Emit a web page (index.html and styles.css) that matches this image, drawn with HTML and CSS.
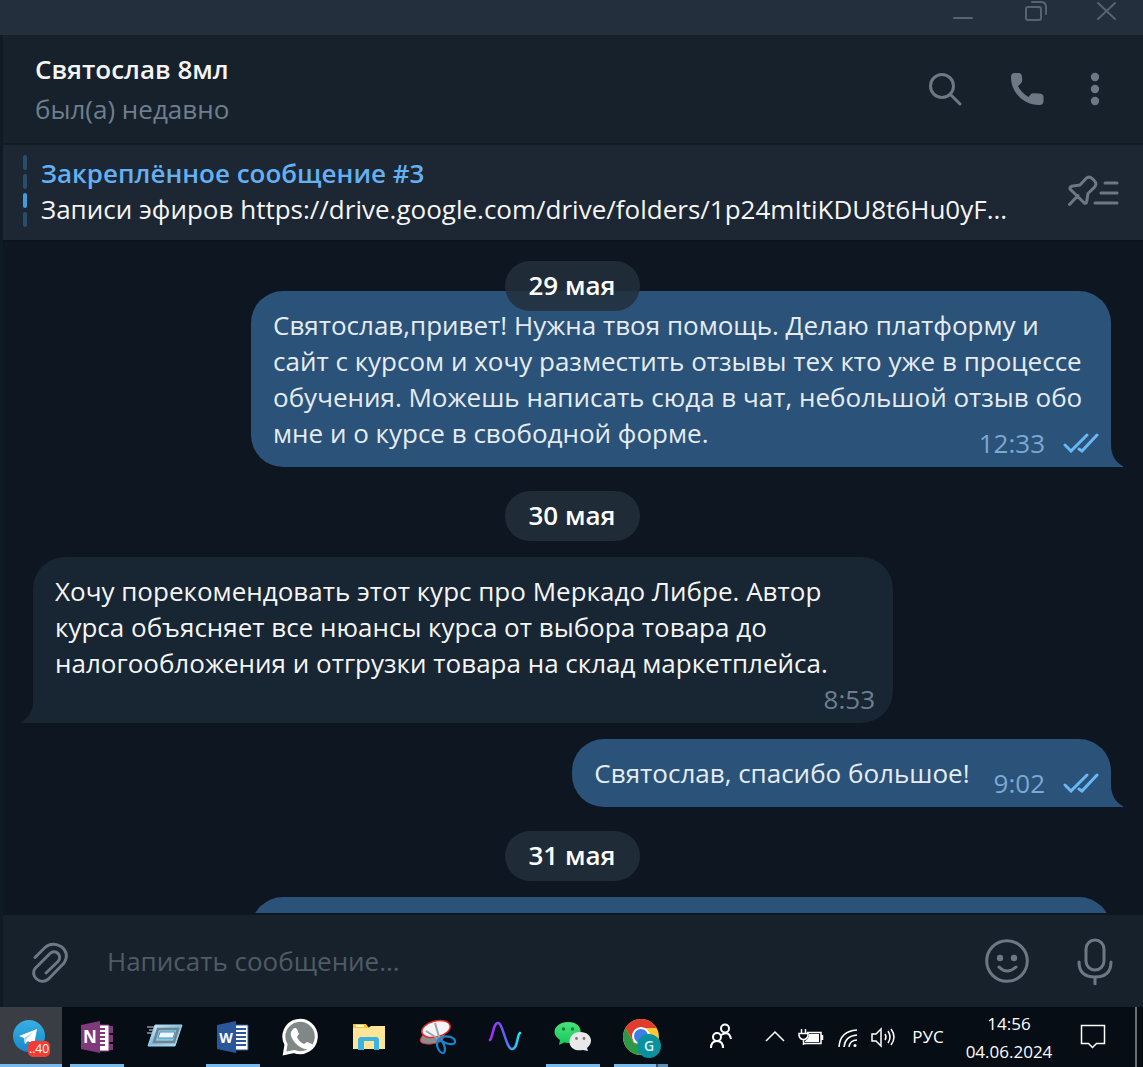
FILE: index.html
```html
<!DOCTYPE html>
<html lang="ru">
<head>
<meta charset="utf-8">
<meta name="viewport" content="width=device-width, initial-scale=1">
<title>Святослав 8мл</title>
<link rel="stylesheet" href="styles.css">
</head>
<body>
<div class="titlebar">
  <button class="window-button" aria-label="Свернуть"><svg width="24" height="24" viewBox="0 0 24 24"><path d="M3 18h18"/></svg></button>
  <button class="window-button" aria-label="Свернуть в окно"><svg width="24" height="24" viewBox="0 0 24 24"><rect x="3" y="7" width="15" height="13" rx="2"/><path d="M9 2h9q5 0 5 5v7"/></svg></button>
  <button class="window-button" aria-label="Закрыть"><svg width="24" height="24" viewBox="0 0 24 24"><path d="M3 3l17 16M20 3L3 19"/></svg></button>
</div>
<div class="app">
  <header class="chat-header">
    <div class="peer">
      <h1 class="peer-name">Святослав 8мл</h1>
      <p class="peer-status">был(а) недавно</p>
    </div>
    <div class="header-actions">
      <button class="icon-button" aria-label="Поиск"><svg width="36" height="36" viewBox="0 0 36 36"><circle cx="15" cy="15" r="11.5"/><path d="M23.500 23.500L33 33"/></svg></button>
      <button class="icon-button" aria-label="Позвонить"><svg width="36" height="36" viewBox="0 0 36 36"><path class="solid" d="M5.500 2h4.500q2.500 0 2.800 2.500l.4 4q.2 2.500-1.200 3.800l-3 3q3.600 6.800 10.500 10.700l2-2.500q1-1.200 3-1.200l5.500.3q4.500.3 4.500 3.200v4.200q0 4-4 4C14.500 34 2 21.500 2 6q0-4 3.500-4z"/></svg></button>
      <button class="icon-button" aria-label="Меню"><svg width="36" height="36" viewBox="0 0 36 36"><circle class="solid" cx="18" cy="6" r="4.200"/><circle class="solid" cx="18" cy="18" r="4.200"/><circle class="solid" cx="18" cy="30" r="4.200"/></svg></button>
    </div>
  </header>
  <section class="pinned">
    <div class="pinned-marks"><i></i><i></i><i class="current"></i><i></i></div>
    <div class="pinned-body">
      <h2 class="pinned-title">Закреплённое сообщение #3</h2>
      <p class="pinned-text">Записи эфиров https://drive.google.com/drive/folders/1p24mItiKDU8t6Hu0yF...</p>
    </div>
    <button class="icon-button" aria-label="Закреплённые сообщения"><svg width="54" height="32" viewBox="0 0 54 32"><path d="M2.500 29.500l8.500-9M3.500 14.500q-1.500-2 1-3.200l8.500-1.300 6-6.500q3-3 6.500.3l1.500 1.500q3.500 3.600.5 6.900L21 18.500l-1.300 8q-.6 3-2.900 1z M38 8h12M34 18h16M28 28h22"/></svg></button>
  </section>

  <main class="history">
    <div class="date date-floating">29 мая</div>
    <article class="message out">Святослав,привет! Нужна твоя помощь. Делаю платформу и сайт с курсом и хочу разместить отзывы тех кто уже в процессе обучения. Можешь написать сюда в чат, небольшой отзыв обо мне и о курсе в свободной форме.<span class="meta"><time>12:33</time><svg class="ticks" width="36" height="20" viewBox="0 0 36 20"><path d="M2 12l6 6L24 2M16 16l3 2L34 2"/></svg></span><svg class="tail" width="12" height="22" viewBox="0 0 12 22"><path d="M0 0c0 10 5 18 12 21v1H0z"/></svg></article>
    <div class="date">30 мая</div>
    <article class="message in">Хочу порекомендовать этот курс про Меркадо Либре. Автор курса объясняет все нюансы курса от выбора товара до налогообложения и отгрузки товара на склад маркетплейса.<span class="meta meta-below"><time>8:53</time></span><svg class="tail" width="12" height="22" viewBox="0 0 12 22"><path d="M12 0c0 10-5 18-12 21v1h12z"/></svg></article>
    <article class="message out">Святослав, спасибо большое!<span class="meta"><time>9:02</time><svg class="ticks" width="36" height="20" viewBox="0 0 36 20"><path d="M2 12l6 6L24 2M16 16l3 2L34 2"/></svg></span><svg class="tail" width="12" height="22" viewBox="0 0 12 22"><path d="M0 0c0 10 5 18 12 21v1H0z"/></svg></article>
    <div class="date">31 мая</div>
    <article class="message out next-message"></article>
  </main>

  <form class="composer">
    <button type="button" class="icon-button" aria-label="Прикрепить файл"><svg width="44" height="48" viewBox="0 0 44 48"><path d="M8 20.500L18 10.500C27 1.500 46 12 37 26L21.500 42C13 49 2 38 8.500 31L23 16.500c5.500-5 13 2 8 8L19 36"/></svg></button>
    <input class="composer-input" type="text" placeholder="Написать сообщение..." aria-label="Написать сообщение">
    <button type="button" class="icon-button" aria-label="Эмодзи"><svg width="48" height="48" viewBox="0 0 48 48"><circle cx="24" cy="24" r="20.300"/><circle class="solid" cx="17" cy="21" r="3.200"/><circle class="solid" cx="31" cy="21" r="3.200"/><path d="M16 30q8 8 17 0"/></svg></button>
    <button type="button" class="icon-button" aria-label="Голосовое сообщение"><svg width="48" height="48" viewBox="0 0 48 48"><rect x="15" y="3" width="18" height="30" rx="9"/><path d="M8 25q0 15 16 15 16 0 16-15M24 41v6"/></svg></button>
  </form>
</div>

<footer class="taskbar">
  <nav class="apps">
    <button class="app-button active running" aria-label="Telegram"><svg width="40" height="40" viewBox="0 0 40 40"><defs><linearGradient id="tg" x1="0" y1="0" x2="0" y2="1"><stop offset="0" stop-color="#38aee3"/><stop offset="1" stop-color="#168acd"/></linearGradient></defs><circle cx="18" cy="18" r="16" fill="url(#tg)"/><path fill="#fff" d="M8 18L26 11l-3 16-6-4-3 3-1-6z"/><path fill="#b9d7eb" d="M13 20l9-6-7 8-1 4z"/><rect x="17" y="23" width="22" height="16" rx="5" fill="#f23c34"/><text x="28" y="35" class="badge-text">..40</text></svg></button>
    <button class="app-button running" aria-label="OneNote"><svg width="40" height="40" viewBox="0 0 40 40"><path fill="#fff" stroke="#80397b" d="M19 7h13v26H19z"/><path fill="#80397b" d="M4 7l19-4v32L4 31zM32 8h4v7h-4zM32 17h4v7h-4zM32 26h4v6h-4z"/><path stroke="#80397b" stroke-width="2" d="M23 11h5M23 15h5M23 19h5M23 23h5M23 27h5"/><text x="13" y="25" class="letter">N</text></svg></button>
    <button class="app-button" aria-label="Выполнить"><svg width="40" height="40" viewBox="0 0 40 40"><defs><linearGradient id="run" x1="0" y1="0" x2="1" y2="1"><stop offset="0" stop-color="#e2f5ff"/><stop offset=".5" stop-color="#79bde2"/><stop offset="1" stop-color="#b9e4f8"/></linearGradient></defs><path fill="url(#run)" stroke="#a4d3eb" d="M10 7h27l-7 21H3z"/><path fill="#8cc6e6" stroke="#71828c" stroke-width="2.500" d="M13 11h20l-4 13H9z"/><path fill="#eef6fb" stroke="#4f91bd" d="M15 14h15l-2 6H13z"/><path stroke="#c5deea" d="M2 9h7M4 12h4M2 15h5"/></svg></button>
    <button class="app-button running" aria-label="Word"><svg width="40" height="40" viewBox="0 0 40 40"><path fill="#fff" stroke="#2b579a" d="M21 7h14v25H21z"/><path fill="#2b579a" d="M4 7l19-4v32L4 31z"/><path stroke="#2b579a" stroke-width="2" d="M23 11h10M23 15h10M23 19h10M23 23h10M23 27h10"/><text x="13" y="25" class="letter word">W</text></svg></button>
    <button class="app-button" aria-label="WhatsApp"><svg width="40" height="40" viewBox="0 0 40 40"><path fill="#7f8787" stroke="#fff" stroke-width="3" d="M3.500 35.500l1.500-9a16.200 16.200 0 1 1 8 7z"/><path fill="#fff" d="M12 11q2-2 4 0l2 5-2 3q2 5 7 7l3-2 5 2q1 3-2 5-4 1-8-1-8-4-11-12-1-4 2-7z"/></svg></button>
    <button class="app-button" aria-label="Проводник"><svg width="40" height="40" viewBox="0 0 40 40"><path fill="#fdc62f" d="M4 6h13l3 4H4z"/><path fill="#fff" d="M7 7h8v2H7z"/><path fill="#ffe596" d="M4 10h15l3-2h14v23H4z"/><path fill="#3bb2e6" d="M9 32V21l2-2h17l2 2v11h-5v-9H15v9z"/></svg></button>
    <button class="app-button" aria-label="Ножницы"><svg width="40" height="40" viewBox="0 0 40 40"><path fill="#8a8d92" stroke="#d33" d="M6 17q-5 6-1 8 8 3 20-2l3-8z"/><ellipse cx="19" cy="11" rx="14.500" ry="8" transform="rotate(-14 19 11)" fill="#f5f5f6" stroke="#e02a2a" stroke-width="1.500"/><path stroke="#9da2aa" stroke-width="2" d="M18 5l5 17M9 13l14 9"/><g fill="none" stroke="#1685d1" stroke-width="2.200"><path d="M22 21c6-5 15-2 16 2s-7 5-16-2zM22 21c7 4 7 14 4 14s-9-7-4-14z"/></g></svg></button>
    <button class="app-button" aria-label="Волна"><svg width="40" height="40" viewBox="0 0 40 40"><defs><linearGradient id="wave" x1="0" y1="0" x2="1" y2="0"><stop offset="0" stop-color="#b026ff"/><stop offset=".5" stop-color="#5b62f5"/><stop offset="1" stop-color="#17e8f5"/></linearGradient></defs><path fill="none" stroke="url(#wave)" stroke-width="2.500" stroke-linecap="round" d="M5 22C8 19 8 5 13 5s8 26 14 26 5-15 8-16"/></svg></button>
    <button class="app-button running" aria-label="WeChat"><svg width="40" height="40" viewBox="0 0 40 40"><defs><linearGradient id="wc" x1="0" y1="0" x2="0" y2="1"><stop offset="0" stop-color="#4be27a"/><stop offset="1" stop-color="#12c95a"/></linearGradient></defs><path fill="url(#wc)" d="M6 27l1-5C-4 15 3 4 15 4c18 0 16 21 0 21l-4-.5z"/><circle cx="10.500" cy="11" r="1.700" fill="#167b3a"/><circle cx="19.500" cy="11" r="1.700" fill="#167b3a"/><path fill="#e9e9ea" d="M35 33l-5-1C12 35 13 14 27 14c12 0 14 11 7 16z"/><circle cx="23.500" cy="20.500" r="1.400" fill="#777"/><circle cx="31" cy="20.500" r="1.400" fill="#777"/></svg></button>
    <button class="app-button running grouped" aria-label="Chrome"><svg width="40" height="40" viewBox="0 0 40 40"><circle cx="20" cy="19" r="18" fill="#fdc833"/><path fill="#e33b2e" d="M4.400 10A18 18 0 0 1 35.600 10H20l-8 13z"/><path fill="#2a9a48" d="M4.400 10L13 25l12 2-6 10A18 18 0 0 1 4.400 10z"/><circle cx="20" cy="18" r="9" fill="#fff"/><circle cx="20" cy="18" r="7" fill="#3b7de9"/><circle cx="28" cy="28" r="12" fill="#0b919d"/><text x="28" y="33" class="profile-letter">G</text></svg></button>
  </nav>
  <div class="tray">
    <button class="tray-button people" aria-label="Люди"><svg width="36" height="36" viewBox="0 0 36 36"><circle cx="14" cy="18" r="4"/><circle cx="22" cy="9.500" r="4"/><path d="M8 29q0-7 6-7t6 7M18 16q8-5 10 4"/></svg></button>
    <button class="tray-button" aria-label="Показать скрытые значки"><svg width="36" height="36" viewBox="0 0 36 36"><path class="thin" d="M11 22l9-9 9 9"/></svg></button>
    <button class="tray-button" aria-label="Батарея"><svg width="36" height="36" viewBox="0 0 36 36"><path class="thin" d="M16 13.500h14v11H12M31.500 16v5M10.500 10v4M14.500 10v4M8 14.500h9v2q-1 4-4.500 4T8 16.500zM12.500 20v6"/><path class="tray-fill" d="M18 15h10v8H14v-1q4-2 4-7z"/></svg></button>
    <button class="tray-button" aria-label="Сеть"><svg width="36" height="36" viewBox="0 0 36 36"><path class="thin" d="M12 28Q13 12 30 11M17 28q1-11 13-12M22 28q1-7 8-7"/><circle class="tray-fill" cx="28" cy="26.500" r="1.500"/></svg></button>
    <button class="tray-button" aria-label="Громкость"><svg width="36" height="36" viewBox="0 0 36 36"><path class="thin" d="M9 15h4l5-5v17l-5-5H9zM22 15q2 3 0 6M25 12q4 6 0 12M28 10q6 8 0 16"/></svg></button>
    <button class="tray-button language">РУС</button>
    <button class="tray-button clock"><time>14:56</time><time>04.06.2024</time></button>
    <button class="tray-button notifications" aria-label="Центр уведомлений"><svg width="36" height="36" viewBox="0 0 36 36"><path class="thin" d="M6.500 6.500h23v18h-8l-4 4-4-4h-7z"/></svg></button>
    <button class="show-desktop" aria-label="Показать рабочий стол"></button>
  </div>
</footer>
</body>
</html>
```
FILE: styles.css
```css
* { box-sizing: border-box; }

body {
  margin: 0;
  height: 100vh;
  display: flex;
  flex-direction: column;
  overflow: hidden;
  background: #0e1621;
  color: #f5f5f5;
  font: 26px/36px "Open Sans", "Noto Sans", sans-serif;
}

h1, h2, p { margin: 0; font-size: inherit; }

button {
  padding: 0;
  border: 0;
  background: none;
  color: inherit;
  font: inherit;
  flex: none;
}

svg { display: block; }

/* Window frame */
.titlebar {
  flex: none;
  display: flex;
  justify-content: flex-end;
  gap: 48px;
  height: 35px;
  padding-right: 24px;
  background: #242f3d;
}
.window-button { height: 24px; }
.window-button svg {
  fill: none;
  stroke: #566371;
  stroke-width: 2;
  stroke-linecap: round;
}

.app {
  flex: 1;
  min-height: 0;
  display: flex;
  flex-direction: column;
  border-left: 3px solid #101a24;
}

.icon-button svg {
  fill: none;
  stroke: #6c7883;
  stroke-width: 3;
  stroke-linecap: round;
  stroke-linejoin: round;
}
.icon-button .solid { fill: #6c7883; stroke: none; }

/* Chat header */
.chat-header {
  flex: none;
  display: flex;
  justify-content: space-between;
  align-items: center;
  padding: 14px 30px 14px 32px;
  background: #17212b;
  line-height: 40px;
}
.peer-name { font-weight: 600; }
.peer-status { color: #6d7f8f; }
.header-actions { display: flex; gap: 46px; }
.header-actions .icon-button:last-child { margin-left: -14px; }

/* Pinned message */
.pinned {
  flex: none;
  display: flex;
  align-items: center;
  gap: 14px;
  padding: 10px 22px 13px 20px;
  border-top: 2px solid #131c25;
  background: #1c2733;
}
.pinned-marks { display: grid; gap: 4px; }
.pinned-marks i { width: 4px; height: 15px; border-radius: 2px; background: #2a4d6c; }
.pinned-marks .current { background: #429bdb; }
.pinned-body { flex: 1; min-width: 0; }
.pinned-title { color: #64b0f2; font-weight: 600; }
.pinned-text { white-space: nowrap; overflow: hidden; text-overflow: ellipsis; }

/* Message history */
.history {
  flex: 1;
  min-height: 0;
  position: relative;
  display: flex;
  flex-direction: column;
  overflow: hidden;
  padding: 49px 32px 0 30px;
  border-top: 2px solid #0b131b;
}
.date {
  flex: none;
  align-self: center;
  margin: 24px 0 16px;
  padding: 6px 24px 8px;
  border-radius: 25px;
  background: rgba(34, 47, 59, 0.85);
  color: #fff;
  font-weight: 600;
}
.date-floating {
  position: absolute;
  top: 19px;
  z-index: 1;
  margin: 0;
}
.message {
  flex: none;
  position: relative;
  display: flow-root;
  max-width: 860px;
  padding: 16px 22px;
  border-radius: 32px;
}
.out { align-self: flex-end; border-bottom-right-radius: 0; background: #2b5278; color: #e4ecf2; }
.in { align-self: flex-start; margin-bottom: 16px; border-bottom-left-radius: 0; background: #182533; }
.next-message { width: 100%; height: 68px; }
.meta {
  float: right;
  display: flex;
  align-items: center;
  gap: 18px;
  margin: 10px -10px -10px 24px;
  color: #7da8d3;
}
.meta-below { margin: 0 -4px -10px 0; color: #6d7f8f; }
.ticks { fill: none; stroke: #6ab7f5; stroke-width: 3; stroke-linecap: round; }
.tail { position: absolute; bottom: 0; }
.out .tail { left: 100%; fill: #2b5278; }
.in .tail { right: 100%; fill: #182533; }

/* Composer */
.composer {
  flex: none;
  display: flex;
  align-items: center;
  gap: 40px;
  height: 94px;
  padding: 0 24px;
  border-top: 2px solid #0d1720;
  background: #17212b;
}
.composer-input {
  flex: 1;
  min-width: 0;
  margin-left: -4px;
  padding: 0;
  border: 0;
  outline: 0;
  background: none;
  color: #f5f5f5;
  font: inherit;
}
.composer-input::placeholder { color: #4f5b67; opacity: 1; }

/* Taskbar */
.taskbar {
  flex: none;
  display: flex;
  justify-content: space-between;
  height: 60px;
  background: #060d15;
}
.apps { display: flex; }
.app-button {
  display: grid;
  place-items: center;
  width: 54px;
  margin: 0 7px;
  padding-top: 5px;
  border-bottom: 3px solid transparent;
}
.active { width: 62px; margin: 0 1px 0 0; background: #3a3e44; }
.running { border-bottom-color: #76b9ed; }
.grouped { border-image: linear-gradient(90deg, #76b9ed 40px, #33506a 40px 42px, #5a8fb9 42px) 3; }
.badge-text, .letter, .profile-letter { fill: #fff; text-anchor: middle; font-family: "Open Sans", sans-serif; }
.badge-text { font-size: 12px; }
.letter { font-size: 17px; font-weight: 700; }
.word { font-size: 14px; }
.profile-letter { font-size: 14px; font-weight: 600; fill: #d5f1f3; }

.tray { display: flex; font-size: 17px; line-height: 28px; color: #fff; }
.tray-button { display: grid; place-items: center; width: 36px; }
.tray-button svg { fill: none; stroke: #fff; stroke-width: 2; }
.tray-button .thin { stroke-width: 1.5; }
.tray-button .tray-fill { fill: #fff; stroke: none; }
.people { width: 40px; margin-right: 14px; }
.language { width: 58px; }
.clock { width: 104px; align-content: center; padding-top: 2px; }
.notifications { width: 64px; margin-right: 10px; }
.show-desktop { width: 8px; border-left: 2px solid #6b6f74; }
```
